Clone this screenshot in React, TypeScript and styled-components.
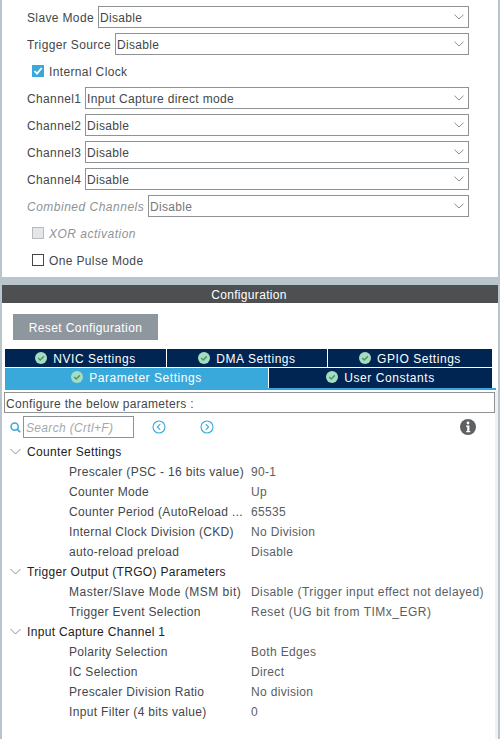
import React from "react";
import styled, { createGlobalStyle } from "styled-components";

const Global = createGlobalStyle`
  html, body { margin: 0; padding: 0; background: #fff; }
  body { font-family: "Liberation Sans", Arial, sans-serif; font-size: 12px; letter-spacing: 0.33px; color: #43474a; }
  * { box-sizing: border-box; }
`;

const Page = styled.div`
  width: 500px;
  height: 739px;
  display: flex;
  flex-direction: column;
  background: #fff;
  border-left: 2px solid #b9c5cc;
  border-right: 2px solid #b9c5cc;
  overflow: hidden;
`;

const Txt = styled.span<{ $ls?: number }>`
  display: block;
  padding-top: 2px;
  white-space: nowrap;
  ${(p) => (p.$ls ? `letter-spacing: ${p.$ls}px;` : "")}
`;

const ModePanel = styled.div`
  display: flex;
  flex-direction: column;
  flex: none;
  gap: 5px;
  height: 277px;
  padding: 6px 0 0 25px;
`;

const FieldRow = styled.div`
  display: flex;
  align-items: center;
  height: 22px;
  width: 442px;
  gap: 4px;
`;

const FieldLabel = styled(Txt)<{ $off?: boolean; $w: number }>`
  width: ${(p) => p.$w}px;
  flex: none;
  color: ${(p) => (p.$off ? "#8f9396" : "#43474a")};
  font-style: ${(p) => (p.$off ? "italic" : "normal")};
  letter-spacing: ${(p) => (p.$off ? "0.5px" : "0.36px")};
`;

const SelectBox = styled.div<{ $off?: boolean }>`
  flex: 1;
  height: 22px;
  display: flex;
  align-items: center;
  justify-content: space-between;
  padding: 0 4px 0 1px;
  border: 1px solid #8f9396;
  background: #fff;
  color: ${(p) => (p.$off ? "#777" : "#43474a")};
`;

const CheckRow = styled.div<{ $off?: boolean }>`
  display: flex;
  align-items: center;
  gap: 5px;
  height: 22px;
  padding-left: 5px;
  color: ${(p) => (p.$off ? "#8f9396" : "#43474a")};
  font-style: ${(p) => (p.$off ? "italic" : "normal")};
  letter-spacing: ${(p) => (p.$off ? "0.5px" : "0.36px")};
`;

const CheckBox = styled.span<{ $state: "on" | "off" | "disabled" }>`
  width: 12px;
  height: 12px;
  display: flex;
  align-items: center;
  justify-content: center;
  background: ${(p) => (p.$state === "on" ? "#39a9dc" : p.$state === "disabled" ? "#e4e7e9" : "#fff")};
  border: 1px solid ${(p) => (p.$state === "on" ? "#39a9dc" : p.$state === "disabled" ? "#b8bcbf" : "#43474a")};
`;

const Band = styled.div`
  height: 8px;
  flex: none;
  background: #b9c5cc;
`;

const TitleBar = styled.div`
  height: 18px;
  flex: none;
  padding-right: 2px;
  background: #4d4f50;
  color: #fff;
  display: flex;
  align-items: center;
  justify-content: center;
`;

const ResetWrap = styled.div`
  padding: 11px 0 9px 11px;
  flex: none;
`;

const ResetButton = styled.div`
  width: 145px;
  height: 26px;
  background: #8f979e;
  color: #fff;
  display: flex;
  align-items: center;
  justify-content: center;
  letter-spacing: 0.4px;
`;

const TabGrid = styled.div`
  margin-left: 3px;
  width: 491px;
  flex: none;
`;

const TabRow = styled.div<{ $top?: boolean }>`
  display: flex;
  height: ${(p) => (p.$top ? "19px" : "20px")};
  gap: 1px;
  width: 487px;
`;

const TabRule = styled.div`
  height: 2px;
  background: #39a9dc;
`;

const Tab = styled.div<{ $active?: boolean; $w: number }>`
  width: ${(p) => p.$w}px;
  flex: none;
  display: flex;
  align-items: center;
  justify-content: center;
  gap: 6px;
  height: 18px;
  color: #fff;
  letter-spacing: 0.55px;
  background: ${(p) => (p.$active ? "#39a9dc" : "#002552")};
`;

const TabBottom = styled(Tab)`
  height: 20px;
  padding-bottom: 2px;
`;

const ScrollArea = styled.div`
  flex: 1;
  display: flex;
  flex-direction: column;
  border-right: 3px solid #f1f1f1;
`;

const ConfigLine = styled.div`
  margin: 2px 0 0 2px;
  width: 491px;
  height: 21px;
  flex: none;
  border: 1px solid #8f9396;
  display: flex;
  align-items: center;
  padding-left: 1px;
`;

const SearchBar = styled.div`
  display: flex;
  align-items: center;
  height: 22px;
  margin-top: 3px;
  flex: none;
  padding-left: 8px;
`;

const SearchInput = styled.div`
  width: 111px;
  height: 22px;
  margin-left: 2px;
  border: 1px solid #8f9396;
  color: #a4a8ab;
  font-style: italic;
  display: flex;
  align-items: center;
  padding-left: 2px;
`;

const NavGroup = styled.div`
  display: flex;
  gap: 34px;
  margin-left: 18px;
`;

const InfoWrap = styled.div`
  margin-left: auto;
  margin-right: 19px;
  display: flex;
`;

const Tree = styled.div`
  display: flex;
  flex-direction: column;
  margin-top: 3px;
`;

const SectionRow = styled.div`
  height: 20px;
  display: flex;
  align-items: center;
  gap: 6px;
  padding-left: 8px;
  color: #222;
`;

const ParamRow = styled.div`
  height: 20px;
  display: grid;
  grid-template-columns: 182px 1fr;
  align-items: center;
  padding-left: 67px;
`;

const ParamValue = styled(Txt)`
  color: #5a5e61;
`;

const Chevron = () => (
  <svg width="11" height="7" viewBox="0 0 11 7" fill="none">
    <path d="M.5 1l5 5 5-5" stroke="#8a8f92" strokeWidth="1" />
  </svg>
);

const Caret = () => (
  <svg width="10" height="6" viewBox="0 0 10 6" fill="none">
    <path d="M.5.7L5 5 9.5.7" stroke="#8a8f92" strokeWidth="1" />
  </svg>
);

const Tick = () => (
  <svg width="10" height="10" viewBox="0 0 10 10" fill="none">
    <path d="M1.5 5l2.5 2.6L8.7 2" stroke="#fff" strokeWidth="1.8" />
  </svg>
);

const TabCheck = () => (
  <svg width="12" height="12" viewBox="0 0 12 12">
    <circle cx="6" cy="6" r="6" fill="#a8dcc0" />
    <path d="M3.2 6l2 2 3.6-3.6" stroke="#3f9a6e" strokeWidth="1.5" fill="none" />
  </svg>
);

const SearchIcon = () => (
  <svg width="11" height="11" viewBox="0 0 13 13" fill="none">
    <circle cx="5.5" cy="5.5" r="4.2" stroke="#39a9dc" strokeWidth="1.8" />
    <path d="M8.5 8.5L12 12" stroke="#39a9dc" strokeWidth="2" />
  </svg>
);

const NavIcon = ({ dir }: { dir: "l" | "r" }) => (
  <svg width="14" height="14" viewBox="0 0 14 14" fill="none">
    <circle cx="7" cy="7" r="6" stroke="#39a9dc" strokeWidth="1.1" />
    <path d={dir === "l" ? "M8.2 4.2L5.4 7l2.8 2.8" : "M5.8 4.2L8.6 7l-2.8 2.8"} stroke="#39a9dc" strokeWidth="1.1" />
  </svg>
);

const InfoIcon = () => (
  <svg width="16" height="16" viewBox="0 0 16 16">
    <circle cx="8" cy="8" r="8" fill="#5d6164" />
    <circle cx="8" cy="4" r="1.4" fill="#fff" />
    <path d="M6.2 6.6h3.2v5.4h.9v1.3H6.2V12h1V7.9h-1z" fill="#fff" />
  </svg>
);

const Field = ({ label, value, off, w }: { label: string; value: string; off?: boolean; w: number }) => (
  <FieldRow>
    <FieldLabel $off={off} $w={w}>{label}</FieldLabel>
    <SelectBox $off={off}>
      <Txt>{value}</Txt>
      <Caret />
    </SelectBox>
  </FieldRow>
);

type Param = { k: string; v: string; kLs?: number; vLs?: number };

const sections: { title: string; rows: Param[] }[] = [
  {
    title: "Counter Settings",
    rows: [
      { k: "Prescaler (PSC - 16 bits value)", v: "90-1" },
      { k: "Counter Mode", v: "Up" },
      { k: "Counter Period (AutoReload ...", v: "65535" },
      { k: "Internal Clock Division (CKD)", v: "No Division" },
      { k: "auto-reload preload", v: "Disable" },
    ],
  },
  {
    title: "Trigger Output (TRGO) Parameters",
    rows: [
      { k: "Master/Slave Mode (MSM bit)", v: "Disable (Trigger input effect not delayed)", kLs: 0.5, vLs: 0.4 },
      { k: "Trigger Event Selection", v: "Reset (UG bit from TIMx_EGR)", vLs: 0.5 },
    ],
  },
  {
    title: "Input Capture Channel 1",
    rows: [
      { k: "Polarity Selection", v: "Both Edges" },
      { k: "IC Selection", v: "Direct" },
      { k: "Prescaler Division Ratio", v: "No division" },
      { k: "Input Filter (4 bits value)", v: "0" },
    ],
  },
];

export default function App() {
  return (
    <Page>
      <Global />
      <ModePanel>
        <Field label="Slave Mode" value="Disable" w={67} />
        <Field label="Trigger Source" value="Disable" w={84} />
        <CheckRow>
          <CheckBox $state="on"><Tick /></CheckBox>
          <Txt>Internal Clock</Txt>
        </CheckRow>
        <Field label="Channel1" value="Input Capture direct mode" w={54} />
        <Field label="Channel2" value="Disable" w={54} />
        <Field label="Channel3" value="Disable" w={54} />
        <Field label="Channel4" value="Disable" w={54} />
        <Field label="Combined Channels" value="Disable" off w={117} />
        <CheckRow $off>
          <CheckBox $state="disabled" />
          <Txt>XOR activation</Txt>
        </CheckRow>
        <CheckRow>
          <CheckBox $state="off" />
          <Txt>One Pulse Mode</Txt>
        </CheckRow>
      </ModePanel>
      <Band />
      <TitleBar><Txt>Configuration</Txt></TitleBar>
      <ResetWrap>
        <ResetButton><Txt>Reset Configuration</Txt></ResetButton>
      </ResetWrap>
      <TabGrid>
        <TabRow $top>
          <Tab $w={161}><TabCheck /><Txt>NVIC Settings</Txt></Tab>
          <Tab $w={160}><TabCheck /><Txt>DMA Settings</Txt></Tab>
          <Tab $w={164}><TabCheck /><Txt>GPIO Settings</Txt></Tab>
        </TabRow>
        <TabRow>
          <TabBottom $w={263} $active><TabCheck /><Txt>Parameter Settings</Txt></TabBottom>
          <TabBottom $w={223}><TabCheck /><Txt>User Constants</Txt></TabBottom>
        </TabRow>
        <TabRule />
      </TabGrid>
      <ScrollArea>
        <ConfigLine><Txt>Configure the below parameters :</Txt></ConfigLine>
        <SearchBar>
          <SearchIcon />
          <SearchInput><Txt>Search (Crtl+F)</Txt></SearchInput>
          <NavGroup>
            <NavIcon dir="l" />
            <NavIcon dir="r" />
          </NavGroup>
          <InfoWrap><InfoIcon /></InfoWrap>
        </SearchBar>
        <Tree>
          {sections.map((s) => (
            <React.Fragment key={s.title}>
              <SectionRow>
                <Chevron />
                <Txt>{s.title}</Txt>
              </SectionRow>
              {s.rows.map((r) => (
                <ParamRow key={r.k}>
                  <Txt $ls={r.kLs}>{r.k}</Txt>
                  <ParamValue $ls={r.vLs}>{r.v}</ParamValue>
                </ParamRow>
              ))}
            </React.Fragment>
          ))}
        </Tree>
      </ScrollArea>
    </Page>
  );
}
